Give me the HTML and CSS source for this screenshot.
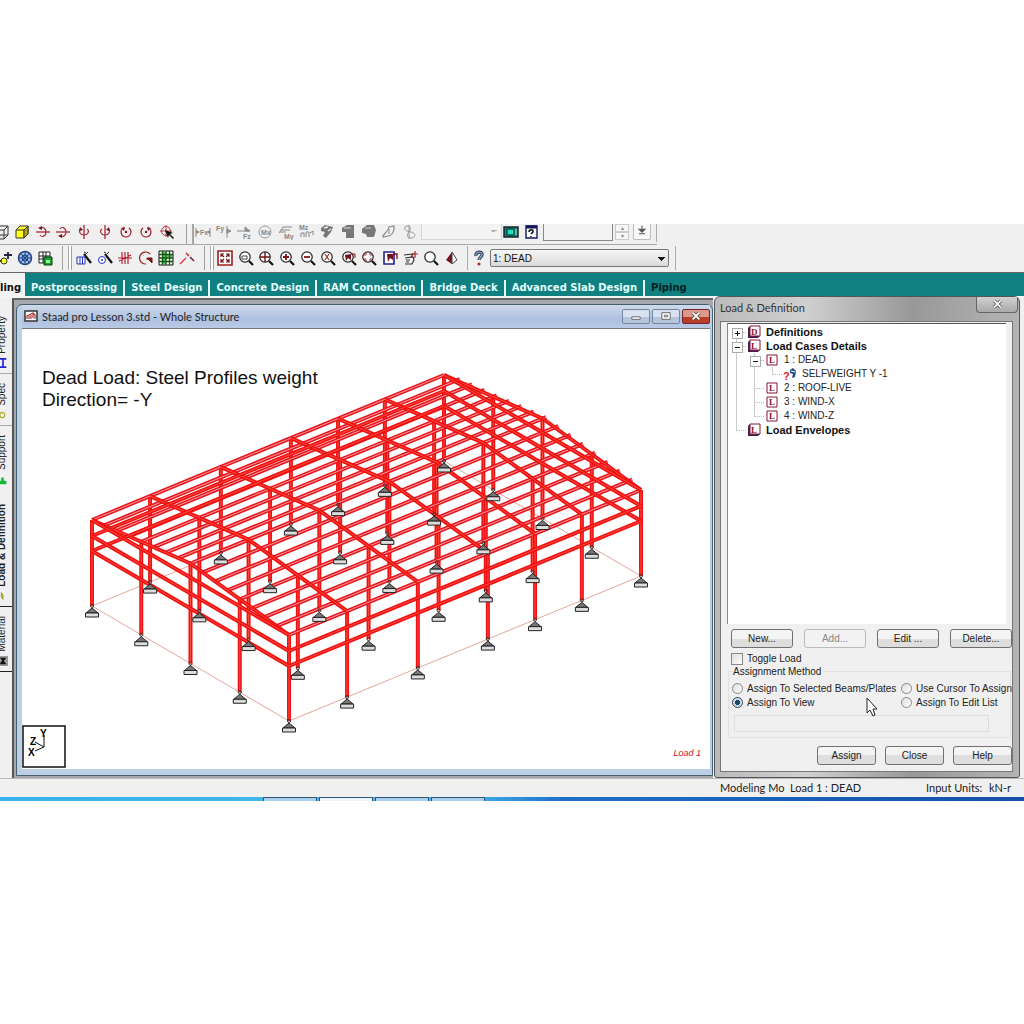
FILE: index.html
```html
<!DOCTYPE html>
<html lang="en">
<head>
<meta charset="UTF-8">
<meta name="viewport" content="width=device-width, initial-scale=1.0">
<title>Staad pro Lesson 3.std - Whole Structure</title>
<link rel="stylesheet" href="styles.css">
</head>
<body>
<svg class="defs" aria-hidden="true">
    <symbol id="lens" viewBox="0 0 16 16"><circle cx="7" cy="7" r="5.2" fill="#fff" stroke="#222" stroke-width="1.2"/><path d="M11 11l4 4" stroke="#111" stroke-width="2.2"/></symbol>
    <symbol id="book" viewBox="0 0 14 14"><path d="M1 3l2-2h10v10l-2 2H1z" fill="#402050"/><path d="M3 1h10v10H3z" fill="#fff" stroke="#8a1530"/></symbol>
</svg>
<div class="app">
    <div class="toolbar toolbar-top">
        <button class="tool half" aria-label="Isometric"><svg viewBox="0 0 16 16"><path d="M1 6h9v9H1zM1 6l4-4h9v9l-4 4M10 6l4-4M5 2v9h9M5 11l-4 4" fill="none" stroke="#333"/></svg></button>
        <div class="tools view-tools">
            <button class="tool" aria-label="Solid view"><svg viewBox="0 0 16 16"><path d="M2 6l4-4h8v8l-4 4H2z" fill="#ffff20" stroke="#333"/><path d="M2 6h8v8M10 6l4-4" fill="none" stroke="#333"/><path d="M10 6l4-4v8l-4 4z" fill="#b8a800" stroke="#333"/></svg></button>
            <button class="tool" aria-label="Rotate up"><svg viewBox="0 0 16 16"><path d="M5 11c2 3 6 1 6-3s-4-6-6-3" fill="none" stroke="#b03040" stroke-width="1.2"/><path d="M1 8h14" stroke="#a01828" stroke-width="1.2"/><path d="M3 4l4-2v4z" fill="#801020"/></svg></button>
            <button class="tool" aria-label="Rotate down"><svg viewBox="0 0 16 16"><path d="M5 11c2 3 6 1 6-3s-4-6-6-3" fill="none" stroke="#b03040" stroke-width="1.2"/><path d="M1 8h14" stroke="#a01828" stroke-width="1.2"/><path d="M3 12l4-2v4z" fill="#801020"/></svg></button>
            <button class="tool" aria-label="Rotate left"><svg viewBox="0 0 16 16"><path d="M5 5c-3 2-1 6 3 6s6-4 3-6" fill="none" stroke="#b03040" stroke-width="1.2"/><path d="M8 1v14" stroke="#a01828" stroke-width="1.2"/><path d="M4 3l3 3-4 1z" fill="#801020"/></svg></button>
            <button class="tool" aria-label="Rotate right"><svg viewBox="0 0 16 16"><path d="M5 5c-3 2-1 6 3 6s6-4 3-6" fill="none" stroke="#b03040" stroke-width="1.2"/><path d="M8 1v14" stroke="#a01828" stroke-width="1.2"/><path d="M12 3l-3 3 4 1z" fill="#801020"/></svg></button>
            <button class="tool" aria-label="Spin left"><svg viewBox="0 0 16 16"><path d="M4 5a5 5 0 1 0 7-1" fill="none" stroke="#a01828" stroke-width="1.2"/><path d="M3 4l4-1-1 4z" fill="#801020"/><circle cx="8" cy="8" r="1.2" fill="#801020"/></svg></button>
            <button class="tool" aria-label="Spin right"><svg viewBox="0 0 16 16"><path d="M12 5a5 5 0 1 1-7-1" fill="none" stroke="#a01828" stroke-width="1.2"/><path d="M13 4l-4-1 1 4z" fill="#801020"/><circle cx="8" cy="8" r="1.2" fill="#801020"/></svg></button>
            <button class="tool" aria-label="Pick rotation"><svg viewBox="0 0 16 16"><circle cx="7" cy="7" r="4.5" fill="none" stroke="#b03040"/><path d="M1 7h12M7 1v12" stroke="#c04050"/><path d="M6 6l8 3-3 1 4 4-1 1-4-4-1 3z" fill="#111"/></svg></button>
        </div>
        <i class="grip"></i>
        <div class="tools force-tools">
            <button class="tool" disabled aria-label="Axial force"><svg viewBox="0 0 16 16"><path d="M1 4v9M15 4v9" stroke="#888"/><path d="M1 6l4 2-4 2zM15 6l-3 2 3 2z" fill="#888"/><text x="5" y="11" class="mini">Fx</text></svg></button>
            <button class="tool" disabled aria-label="Shear Y"><svg viewBox="0 0 16 16"><path d="M11 2v12M11 5l4 2-4 2z" fill="#999" stroke="#888"/><text x="0" y="7" class="mini">Fy</text></svg></button>
            <button class="tool" disabled aria-label="Shear Z"><svg viewBox="0 0 16 16"><path d="M1 7h13M9 3v4l5 0z" fill="#999" stroke="#888"/><text x="7" y="15" class="mini">Fz</text></svg></button>
            <button class="tool" disabled aria-label="Moment X"><svg viewBox="0 0 16 16"><circle cx="8" cy="8" r="6" fill="none" stroke="#999"/><text x="4" y="11" class="mini">Mx</text></svg></button>
            <button class="tool" disabled aria-label="Moment Y"><svg viewBox="0 0 16 16"><path d="M1 9L5 3h9M3 6h9M2 8h6" fill="none" stroke="#888"/><text x="6" y="15" class="mini">My</text></svg></button>
            <button class="tool" disabled aria-label="Moment Z"><svg viewBox="0 0 16 16"><text x="1" y="6" class="mini">Mz</text><path d="M3 13V9h3v4M8 13V8h3v5M12 9l3-2v4" fill="none" stroke="#888"/></svg></button>
            <button class="tool" disabled aria-label="Beam stress"><svg viewBox="0 0 16 16"><path d="M2 4l4-3 8 2-2 5-5 6-3-2 2-4-4-1z" fill="#777"/><path d="M5 4l4-1M9 7l3-2" stroke="#eee" stroke-width="1.4"/></svg></button>
            <button class="tool" disabled aria-label="Plate stress"><svg viewBox="0 0 16 16"><path d="M2 4l5-3h7v13H6V8H2z" fill="#777"/><path d="M4 4h7" stroke="#ddd"/></svg></button>
            <button class="tool" disabled aria-label="Solid stress"><svg viewBox="0 0 16 16"><path d="M1 5l5-4h7l2 5-2 7H6l-1-3-4-1z" fill="#777"/><path d="M4 4h6" stroke="#ccc"/></svg></button>
            <button class="tool" disabled aria-label="Mode shape"><svg viewBox="0 0 16 16"><path d="M2 13c0-4 5-4 6-10l5-1c1 6-3 10-6 10z" fill="none" stroke="#888" stroke-width="1.2"/><path d="M8 5v5" stroke="#888"/></svg></button>
            <button class="tool" disabled aria-label="Deflection"><svg viewBox="0 0 16 16"><path d="M3 3c6-4 6 3 4 5s-3 6 2 6 5-5 0-6-7-2-6-5zM7 1v14" fill="none" stroke="#999"/></svg></button>
        </div>
        <select class="combo-faded" disabled aria-label="Mode"><option></option></select>
        <button class="tool" aria-label="Animation"><svg viewBox="0 0 16 16"><path d="M1 3h14v10H1z" fill="#188" stroke="#222" stroke-width="1.5"/><path d="M4 5h7v6H4z" fill="#20e0b0" stroke="#024"/><path d="M13 5v6" stroke="#afa"/></svg></button>
        <button class="tool" aria-label="Help topics"><svg viewBox="0 0 16 16"><path d="M3 2h11v12H3z" fill="#fff" stroke="#15155c" stroke-width="1.4"/><path d="M3 3h11" stroke="#15155c" stroke-width="3"/><path d="M6 8c0-3 5-3 4 0L8 10M8 12v1" fill="none" stroke="#111" stroke-width="1.5"/></svg></button>
        <input class="scale-box" aria-label="Scale">
        <div class="spinner"><button aria-label="Increase">&#9652;</button><button aria-label="Decrease">&#9662;</button></div>
        <button class="drop" aria-label="Apply scale"><svg viewBox="0 0 16 16"><path d="M8 2v7M4 7h8l-4 4zM4 13h8" fill="#555" stroke="#555" stroke-width="1.4"/></svg></button>
        <i class="bar-end"></i>
    </div>

    <div class="toolbar toolbar-low">
        <div class="tools left-tools">
            <button class="tool" aria-label="Add node"><svg viewBox="0 0 16 16"><path d="M2 11h6" stroke="#333" stroke-width="2"/><circle cx="8" cy="11" r="3" fill="#ff3" stroke="#332"/><path d="M12 2v7M8 5h8" stroke="#224" stroke-width="1.8"/></svg></button>
            <button class="tool" aria-label="Mesh"><svg viewBox="0 0 16 16"><circle cx="8" cy="8" r="6.5" fill="#9bd" stroke="#224488" stroke-width="1.5"/><circle cx="8" cy="8" r="3" fill="none" stroke="#224488"/><path d="M8 1v14M1 8h14M3 3l10 10M13 3L3 13" stroke="#224488"/></svg></button>
            <button class="tool" aria-label="Table"><svg viewBox="0 0 16 16"><path d="M1 2h11v11H1zM1 6h11M1 9h11M5 2v11M8 2v11" fill="#fff" stroke="#222"/><path d="M6 7h8v8H6z" fill="#1b9e30" stroke="#041"/><path d="M8 10h4v3H8z" fill="#9f9"/></svg></button>
        </div>
        <i class="grip grip-a"></i>
        <div class="tools geo-tools">
            <button class="tool" aria-label="Structure wizard"><svg viewBox="0 0 16 16"><path d="M1 7h8v7H1zM4 7v7M6.500 7v7" fill="#fff" stroke="#2030c0"/><path d="M8 4l7 9" stroke="#111" stroke-width="2.2"/><path d="M12 2l-4 4M8 2l2 1" stroke="#333"/></svg></button>
            <button class="tool" aria-label="Node wizard"><svg viewBox="0 0 16 16"><circle cx="5" cy="10" r="3.500" fill="#fff" stroke="#2030c0"/><circle cx="5" cy="10" r="1" fill="#2030c0"/><path d="M8 4l7 9" stroke="#111" stroke-width="2.2"/><path d="M12 2L8 6M7 2l2 1" stroke="#333"/></svg></button>
            <button class="tool" aria-label="Translate"><svg viewBox="0 0 16 16"><path d="M1 8h14M5 2v12M8 2v12M11 2v12M2 11l12-6" stroke="#b02030" stroke-width="1.2"/></svg></button>
            <button class="tool" aria-label="Circular repeat"><svg viewBox="0 0 16 16"><path d="M12 4a6 6 0 1 0-4 10" fill="none" stroke="#922" stroke-width="1.2"/><path d="M8 9h5M9 8l5 5V8z" fill="#711" stroke="#711"/></svg></button>
            <button class="tool" aria-label="Grid"><svg viewBox="0 0 16 16"><path d="M1 1h14v14H1z" fill="#fff" stroke="#111"/><path d="M5 2h3v12H5zM9 5h5v3H9z" fill="#5c5"/><path d="M1 4.500h14M1 8h14M1 11.500h14M4.500 1v14M8 1v14M11.500 1v14" stroke="#151" stroke-width="1.3"/></svg></button>
            <button class="tool" aria-label="Split beam"><svg viewBox="0 0 16 16"><path d="M1 14l6-6" stroke="#e04040" stroke-width="1.4"/><path d="M7 3l3 3" stroke="#d02030" stroke-width="1.4"/><path d="M11 7l4 4" stroke="#625" stroke-width="1.6"/></svg></button>
        </div>
        <i class="grip grip-b"></i>
        <div class="tools zoom-tools">
            <button class="tool" aria-label="Whole structure"><svg viewBox="0 0 16 16"><path d="M1 1h14v14H1z" fill="#fff" stroke="#922" stroke-width="1.6"/><path d="M4 7V4h3M4 4l3 3M12 7V4H9M12 4L9 7M4 9v3h3M4 12l3-3M12 9v3H9M12 12L9 9" fill="none" stroke="#711" stroke-width="1.2"/></svg></button>
            <button class="tool" aria-label="Zoom window"><svg viewBox="0 0 16 16"><use href="#lens"/><path d="M4 6h5v3H4z" fill="none" stroke="#444"/></svg></button>
            <button class="tool" aria-label="Zoom extents"><svg viewBox="0 0 16 16"><use href="#lens"/><path d="M7 2v10M2 7h10" stroke="#711" stroke-width="1.4"/></svg></button>
            <button class="tool" aria-label="Zoom in"><svg viewBox="0 0 16 16"><use href="#lens"/><path d="M7 4v6M4 7h6" stroke="#811" stroke-width="1.8"/></svg></button>
            <button class="tool" aria-label="Zoom out"><svg viewBox="0 0 16 16"><use href="#lens"/><path d="M4 7h6" stroke="#811" stroke-width="1.8"/></svg></button>
            <button class="tool" aria-label="Zoom factor"><svg viewBox="0 0 16 16"><use href="#lens"/><path d="M5 4l4 6M9 4l-4 6" stroke="#a33" stroke-width="1.2"/></svg></button>
            <button class="tool" aria-label="Zoom previous"><svg viewBox="0 0 16 16"><use href="#lens"/><path d="M4 5l6-1v6l-3-2-2 3z" fill="#701020"/><path d="M10 4h4v4" fill="none" stroke="#811"/></svg></button>
            <button class="tool" aria-label="Zoom all"><svg viewBox="0 0 16 16"><use href="#lens"/><path d="M4 6V4h2M8 4h2v2M10 8v2H8M6 10H4V8" fill="none" stroke="#a33"/></svg></button>
            <button class="tool" aria-label="Display region"><svg viewBox="0 0 16 16"><path d="M2 2h10v12H2z" fill="#fff" stroke="#228" stroke-width="1.6"/><path d="M5 4l6 0v6l-3-2-2 4z" fill="#701020"/><path d="M11 4h4v5" fill="none" stroke="#811" stroke-width="1.3"/></svg></button>
            <button class="tool" aria-label="Pan"><svg viewBox="0 0 16 16"><path d="M2 14h7l2-4-1-3-8 1M1 5l9-1-2 3M3 10h4M3 12h3" fill="none" stroke="#333" stroke-width="1.2"/><path d="M12 1v7M9 4h6" stroke="#a22" stroke-width="1.2"/></svg></button>
            <button class="tool" aria-label="Magnifier"><svg viewBox="0 0 16 16"><use href="#lens"/></svg></button>
            <button class="tool" aria-label="Perspective"><svg viewBox="0 0 16 16"><path d="M8 2L2 10l6 4z" fill="#701020"/><path d="M8 2l5 8-5 4z" fill="#fff" stroke="#444"/></svg></button>
        </div>
        <i class="line"></i>
        <button class="tool help-tool" aria-label="What is this"><svg viewBox="0 0 16 16"><path d="M5 6c-1-5 7-5 6-1-1 3-3 2-3 5" fill="none" stroke="#334" stroke-width="3.200"/><path d="M5 6c-1-5 7-5 6-1-1 3-3 2-3 5" fill="none" stroke="#7ad" stroke-width="1.300"/><circle cx="8" cy="14" r="1.600" fill="#a33"/></svg></button>
        <select class="load-combo" aria-label="Active load"><option>1: DEAD</option></select>
        <i class="line"></i>
    </div>

    <nav class="tabs">
        <a class="active" href="#">ling</a>
        <a href="#">Postprocessing</a>
        <a href="#">Steel Design</a>
        <a href="#">Concrete Design</a>
        <a href="#">RAM Connection</a>
        <a href="#">Bridge Deck</a>
        <a href="#">Advanced Slab Design</a>
        <a class="off" href="#">Piping</a>
    </nav>

    <div class="main">
        <div class="pages">
            <a class="page-property" href="#"><svg viewBox="0 0 12 12"><path d="M2 1h8M2 11h8M6 1v10" stroke="#22d" stroke-width="2"/></svg><span>Property</span></a>
            <a class="page-spec" href="#"><svg viewBox="0 0 12 12"><circle cx="5" cy="6" r="3" fill="#fff" stroke="#aa2" stroke-width="1.500"/></svg><span>Spec</span></a>
            <a class="page-support" href="#"><svg viewBox="0 0 12 12"><path d="M1 11V7h3V3h3v4h3v4z" fill="#1b3"/></svg><span>Support</span></a>
            <a class="page-load" href="#"><svg viewBox="0 0 12 12"><path d="M4 2v5l2 3V5z" fill="#dd2" stroke="#882"/></svg><span>Load &amp; Definition</span></a>
            <a class="page-material" href="#"><svg viewBox="0 0 12 12"><path d="M0 0h12v12H0z" fill="#999"/><path d="M2 2l3 3-3 5h8L7 6l3-4z" fill="#111"/></svg><span>Material</span></a>
        </div>

        <div class="workspace">
            <div class="window">
                <div class="window-title">
                    <svg class="doc-icon" viewBox="0 0 14 12"><path d="M1 1h12v10H1z" fill="#fff" stroke="#333" stroke-width="1.500"/><path d="M3 9V6l6-3 2 2v4M5 9V6M7 9V5M9 8V4" fill="none" stroke="#a33" stroke-width="1.200"/></svg>
                    <span>Staad pro Lesson 3.std - Whole Structure</span>
                    <div class="window-buttons">
                        <button aria-label="Minimize"><svg viewBox="0 0 12 12"><path d="M1 7h10v3H1z" fill="#fff" stroke="#555"/></svg></button>
                        <button aria-label="Maximize"><svg viewBox="0 0 12 12"><path d="M1 2h10v8H1z" fill="#fff" stroke="#555"/><path d="M4 5h4v2H4z" fill="none" stroke="#555"/></svg></button>
                        <button class="close" aria-label="Close window"><svg viewBox="0 0 12 12"><path d="M2 2l8 8M10 2l-8 8" stroke="#544" stroke-width="4"/><path d="M2 2l8 8M10 2l-8 8" stroke="#fff" stroke-width="2.200"/></svg></button>
                    </div>
                </div>
                <div class="view">
                    <svg id="model" viewBox="0 0 688 440" preserveAspectRatio="xMinYMin meet"></svg>
                    <p class="note">Dead Load: Steel Profiles weight<br>Direction= -Y</p>
                    <svg class="axes" viewBox="0 0 44 43"><path d="M1 1h42v41H1z" fill="#fff" stroke="#111" stroke-width="1.500"/><path d="M22 22V10M22 22l-9-5M22 22l-9 4" fill="none" stroke="#111"/><text x="18" y="12">Y</text><text x="8" y="20">Z</text><text x="6" y="31">X</text></svg>
                    <span class="load-label">Load 1</span>
                </div>
            </div>
        </div>

        <div class="dialog">
            <div class="dialog-title">
                <span>Load &amp; Definition</span>
                <button aria-label="Close dialog"><svg viewBox="0 0 12 12"><path d="M2 2l8 8M10 2l-8 8" stroke="#555" stroke-width="4"/><path d="M2 2l8 8M10 2l-8 8" stroke="#fff" stroke-width="2"/></svg></button>
            </div>
            <div class="dialog-body">
                <ul class="tree">
                    <li class="top"><i class="g box plus first"></i><svg viewBox="0 0 14 14"><use href="#book"/><text x="4" y="10">D</text></svg>Definitions</li>
                    <li class="top"><i class="g box minus"></i><svg viewBox="0 0 14 14"><use href="#book"/><text x="4" y="10">L</text></svg>Load Cases Details</li>
                    <li><i class="g pipe"></i><i class="g box minus"></i><svg viewBox="0 0 14 14"><path d="M2 2h10v10H2z" fill="#fff" stroke="#8a1530"/><text x="4" y="10">L</text></svg>1 : DEAD</li>
                    <li><i class="g pipe"></i><i class="g pipe"></i><i class="g elbow"></i><svg viewBox="0 0 14 14"><text x="0" y="13" class="query">?</text><path d="M7 3l3-2 3 3-1 6-3 1 1-4-3-1z" fill="#1c4f7c"/><path d="M8 4l4 1" stroke="#fff"/></svg>SELFWEIGHT Y -1</li>
                    <li><i class="g pipe"></i><i class="g tee"></i><svg viewBox="0 0 14 14"><path d="M2 2h10v10H2z" fill="#fff" stroke="#8a1530"/><text x="4" y="10">L</text></svg>2 : ROOF-LIVE</li>
                    <li><i class="g pipe"></i><i class="g tee"></i><svg viewBox="0 0 14 14"><path d="M2 2h10v10H2z" fill="#fff" stroke="#8a1530"/><text x="4" y="10">L</text></svg>3 : WIND-X</li>
                    <li><i class="g pipe"></i><i class="g elbow"></i><svg viewBox="0 0 14 14"><path d="M2 2h10v10H2z" fill="#fff" stroke="#8a1530"/><text x="4" y="10">L</text></svg>4 : WIND-Z</li>
                    <li class="top"><i class="g elbow"></i><svg viewBox="0 0 14 14"><use href="#book"/><text x="4" y="10">L</text></svg>Load Envelopes</li>
                </ul>
                <div class="edit-row">
                    <button class="btn">New...</button>
                    <button class="btn" disabled>Add...</button>
                    <button class="btn">Edit ...</button>
                    <button class="btn">Delete...</button>
                </div>
                <label class="check"><input type="checkbox">Toggle Load</label>
                <fieldset>
                    <legend>Assignment Method</legend>
                    <div class="methods">
                        <label><input type="radio" name="method">Assign To Selected Beams/Plates</label>
                        <label><input type="radio" name="method">Use Cursor To Assign</label>
                        <label><input type="radio" name="method" checked>Assign To View</label>
                        <label><input type="radio" name="method">Assign To Edit List</label>
                    </div>
                    <input class="edit-list" type="text" disabled aria-label="Edit list">
                </fieldset>
                <div class="action-row">
                    <button class="btn">Assign</button>
                    <button class="btn">Close</button>
                    <button class="btn">Help</button>
                </div>
                <svg class="cursor" viewBox="0 0 12 20"><path d="M1 1v15l3-3 3 6 2-1-2-6h4z" fill="#fff" stroke="#222"/></svg>
            </div>
        </div>
    </div>

    <footer class="status">
        <span class="mode">Modeling Mo</span>
        <span class="load">Load 1 : DEAD</span>
        <span class="units">Input Units:</span>
        <span class="unit">kN-r</span>
    </footer>
    <div class="taskbar"><i></i><i class="lit"></i><i></i><i></i></div>
</div>
<script src="script.js"></script>
</body>
</html>
```
FILE: styles.css
```css
* {
    box-sizing: border-box;
}

body {
    margin: 0;
    min-height: 100vh;
    display: flex;
    flex-direction: column;
    justify-content: center;
    background: #fff;
    font-family: "Liberation Sans", Arial, sans-serif;
    font-size: 10px;
    color: #222;
}

a {
    color: inherit;
    text-decoration: none;
}

button {
    padding: 0;
    font: inherit;
    color: inherit;
}

.defs {
    position: absolute;
    width: 0;
    height: 0;
}

.app {
    background: #f0f0f0;
    overflow: hidden;
}

/* toolbars */
.toolbar {
    display: flex;
    align-items: center;
    border-bottom: 1px solid #a8a8a8;
}

.toolbar-top {
    height: 21px;
    padding-bottom: 4px;
    width: 657px;
}

.toolbar-low {
    height: 27px;
    border-bottom: 0;
}

.tools {
    display: flex;
    justify-content: space-between;
    flex: none;
}

.tool {
    width: 16px;
    height: 16px;
    flex: none;
    border: 0;
    background: none;
}

.tool svg {
    display: block;
    width: 16px;
    height: 16px;
}

.half {
    margin-left: -6px;
}

.view-tools {
    width: 161px;
    margin-left: 4px;
}

.force-tools {
    width: 223px;
    margin-right: 3px;
}

.left-tools {
    width: 58px;
    margin-left: -4px;
}

.geo-tools {
    width: 119px;
}

.zoom-tools {
    width: 243px;
    margin-right: 7px;
}

.mini {
    font-size: 7px;
    font-weight: bold;
    fill: #888;
}

.grip {
    width: 10px;
    height: 24px;
    flex: none;
    border: solid #a0a0a0;
    border-width: 0 1px;
    background: linear-gradient(90deg, transparent 5px, #aaa 5px, #aaa 6px, #fff 6px);
}

.toolbar-top .grip {
    width: 8px;
    margin: 0 1px 0 11px;
}

.grip-a {
    margin: 0 4px 0 8px;
}

.grip-b {
    margin: 0 3px 0 9px;
}

.line {
    width: 1px;
    height: 24px;
    background: #aaa;
}

.bar-end {
    width: 1px;
    height: 21px;
    margin-left: auto;
    background: #aaa;
}

.combo-faded {
    width: 81px;
    height: 17px;
    margin-right: 1px;
    appearance: none;
    border: 1px solid #ccc;
    border-top: 0;
    background: linear-gradient(to bottom left, #999 50%, transparent 50%) no-repeat 69px 7px / 3px 3px,
        linear-gradient(to bottom right, #999 50%, transparent 50%) no-repeat 72px 7px / 3px 3px,
        #f6f6f6;
}

.combo-faded ~ .tool {
    margin-right: 4px;
}

.scale-box {
    width: 70px;
    height: 18px;
    border: 1px solid #888;
    border-top: 0;
    background: #f4f4f4;
}

.spinner {
    display: flex;
    flex-direction: column;
    width: 14px;
    margin: 0 4px 0 2px;
}

.spinner button {
    height: 8px;
    border: 1px solid #ccc;
    background: #f6f6f6;
    font-size: 6px;
    line-height: 6px;
    color: #888;
}

.drop {
    width: 18px;
    height: 17px;
    border: 1px solid #bbb;
    border-top: 0;
    border-radius: 2px;
    background: #f8f8f8;
}

.drop svg {
    width: 12px;
    height: 12px;
}

.help-tool {
    margin: 0 3px;
}

.load-combo {
    width: 179px;
    height: 18px;
    margin-right: 6px;
    padding: 0 2px;
    border: 1px solid #777;
    border-radius: 2px;
    appearance: none;
    font: inherit;
    color: #111;
    background: linear-gradient(to bottom left, #111 50%, transparent 50%) no-repeat 167px 7px / 4px 4px,
        linear-gradient(to bottom right, #111 50%, transparent 50%) no-repeat 171px 7px / 4px 4px,
        linear-gradient(#f6f6f6, #dadada);
}

/* mode tabs */
.tabs {
    display: flex;
    align-items: flex-end;
    height: 26px;
    border-top: 1px solid #666;
    border-bottom: 2px solid #f4f4f4;
    background: #108080;
    font: bold 10px/16px "DejaVu Sans", Verdana, sans-serif;
    color: #e4ffff;
}

.tabs a {
    padding: 0 6px;
    border-right: 2px solid #e8f8f8;
}

.tabs .active {
    align-self: stretch;
    width: 25px;
    padding: 7px 0 0;
    border: 0;
    background: #f4f4f4;
    color: #111;
}

.tabs .off {
    border: 0;
    color: #022;
}

/* main area */
.main {
    display: grid;
    grid-template-columns: 12px minmax(0, 1fr) 311px;
}

.pages {
    display: flex;
    flex-direction: column;
    overflow: hidden;
    background: #f0f0f0;
}

.pages a {
    display: flex;
    flex-direction: column-reverse;
    align-items: flex-end;
    gap: 3px;
    padding: 0 4px 4px 0;
    border-bottom: 1px solid #aaa;
}

.pages span {
    writing-mode: vertical-rl;
    transform: rotate(180deg);
    line-height: 12px;
}

.pages svg {
    width: 10px;
    height: 12px;
    flex: none;
}

.page-property {
    height: 76px;
}

.page-spec {
    height: 52px;
}

.page-support {
    height: 64px;
}

.pages .page-support {
    border: 0;
}

.pages .page-load {
    height: 117px;
    border-color: #222;
    font-weight: bold;
}

.pages .page-material {
    height: 65px;
    border-color: #222;
}

.workspace {
    padding: 4px 0 2px 2px;
    border-top: 2px solid #666;
    border-left: 2px solid #555;
    background: #a5a9ad;
}

.window {
    padding: 0 2px 6px 5px;
    border: 1px solid #45606c;
    border-radius: 6px 6px 0 0;
    background: #bccfe6;
}

.window-title {
    display: flex;
    align-items: center;
    height: 23px;
    font: 11px Lato, "Segoe UI", sans-serif;
    background: linear-gradient(#d0dbea, #adc0df 60%, #b8cae4);
}

.doc-icon {
    width: 14px;
    height: 12px;
    margin: 0 4px 0 2px;
}

.window-buttons {
    display: flex;
    gap: 2px;
    margin-left: auto;
}

.window-buttons button {
    width: 28px;
    height: 15px;
    border: 1px solid #7587a0;
    border-radius: 2px;
    background: linear-gradient(#d8e2f0 50%, #b6c5da 50%);
}

.window-buttons svg {
    display: block;
    width: 12px;
    height: 10px;
    margin: auto;
}

.window-buttons .close {
    border-color: #723;
    background: linear-gradient(#dc9a88 50%, #b83e28 50%);
}

.view {
    position: relative;
    border-top: 1px solid #777;
    background: #fff;
}

#model {
    display: block;
    width: 100%;
}

.note {
    position: absolute;
    left: 20px;
    top: 38px;
    margin: 0;
    font-size: 19px;
    line-height: 22px;
    color: #111;
}

.axes {
    position: absolute;
    left: 0;
    bottom: 1px;
    width: 44px;
    height: 43px;
    font-size: 10px;
    font-weight: bold;
}

.load-label {
    position: absolute;
    right: 9px;
    bottom: 11px;
    font-size: 9px;
    font-style: italic;
    color: #e01010;
}

.ground {
    fill: none;
    stroke: #e0a898;
}

.member {
    stroke: #f01010;
    stroke-width: 4;
}

.core {
    stroke: #ff4a40;
    stroke-width: 1;
}

.purlin {
    stroke: #e81420;
    stroke-width: 4;
}

.purlin-core {
    stroke: #ffa09a;
    stroke-width: 1;
}

.support {
    fill: #777;
    stroke: #222;
}

.plate {
    fill: #ddd;
    stroke: #222;
}

.pin {
    fill: none;
    stroke: #333;
}

/* load dialog */
.dialog {
    position: relative;
    display: flex;
    flex-direction: column;
    margin: -2px 4px 0 1px;
    padding: 0 6px 5px 5px;
    border: 1px solid #555;
    border-radius: 6px 6px 3px 3px;
    background: linear-gradient(90deg, #bbb, #d0d0d0 30%, #989898 65%, #b4b4b4);
}

.dialog-title {
    display: flex;
    align-items: flex-start;
    justify-content: space-between;
    height: 24px;
    font: 11px/22px Lato, "Segoe UI", sans-serif;
    color: #333;
}

.dialog-title button {
    width: 42px;
    height: 16px;
    margin-right: -5px;
    border: 1px solid #666;
    border-top: 0;
    border-radius: 0 0 4px 4px;
    background: linear-gradient(#d0d0d0, #aaa);
}

.dialog-title svg {
    display: block;
    width: 11px;
    height: 10px;
    margin: auto;
}

.dialog-body {
    position: relative;
    flex: 1;
    padding: 1px 0 0 6px;
    border: 1px solid #777;
    background: #f0f0f0;
}

.tree {
    width: 279px;
    height: 301px;
    margin: 0;
    padding: 1px 0 0;
    list-style: none;
    border-top: 1px solid #555;
    border-left: 1px solid #888;
    background: #fff;
}

.tree li {
    display: flex;
    align-items: center;
    height: 14px;
    white-space: pre;
}

.tree .top {
    font-size: 11px;
    font-weight: bold;
    color: #111;
}

.tree svg {
    width: 14px;
    height: 14px;
    margin: 0 5px 0 1px;
    font: bold 9px "Liberation Serif", serif;
    fill: #8a1530;
}

.tree .query {
    font: bold 11px "Liberation Sans", sans-serif;
    fill: #e02020;
}

.g {
    position: relative;
    width: 18px;
    height: 14px;
    flex: none;
}

.pipe,
.tee,
.box {
    background: linear-gradient(#ccc, #ccc) no-repeat 8px 0 / 1px 14px;
}

.elbow {
    background: linear-gradient(#ccc, #ccc) no-repeat 8px 0 / 1px 8px;
}

.first {
    background-position: 8px 7px;
}

.tee::after,
.elbow::after,
.box::after {
    content: "";
    position: absolute;
    left: 9px;
    top: 7px;
    width: 9px;
    border-top: 1px dotted #bbb;
}

.box::before {
    content: "";
    position: absolute;
    z-index: 1;
    left: 4px;
    top: 3px;
    width: 9px;
    height: 9px;
    border: 1px solid #aaa;
    background: linear-gradient(#111, #111) no-repeat center / 5px 1px, #fff;
}

.plus::before {
    background: linear-gradient(#111, #111) no-repeat center / 5px 1px,
        linear-gradient(#111, #111) no-repeat center / 1px 5px, #fff;
}

.btn {
    width: 62px;
    height: 19px;
    border: 1px solid #707070;
    border-radius: 3px;
    background: linear-gradient(#f4f4f4 50%, #dedede 50%);
    color: #222;
}

.btn:disabled {
    border-color: #bbb;
    background: #f2f2f2;
    color: #888;
}

.edit-row {
    display: flex;
    gap: 11px;
    margin: 5px 0 4px 4px;
}

.check,
.methods label {
    display: flex;
    align-items: center;
    height: 14px;
    white-space: nowrap;
}

.check {
    margin-left: 4px;
}

.check input,
.methods input {
    appearance: none;
    width: 12px;
    height: 12px;
    flex: none;
    margin: 0 4px 0 0;
    border: 1px solid #888;
    background: linear-gradient(135deg, #ddd, #fff);
}

.methods input {
    width: 11px;
    height: 11px;
    border-radius: 50%;
}

.methods input:checked {
    border-color: #345;
    background: radial-gradient(#1a4560 35%, #cde 45%);
}

fieldset {
    min-width: 0;
    margin: 0 1px 8px;
    padding: 4px 0 5px 3px;
    border: 1px solid #e2e2e2;
}

legend {
    height: 12px;
    padding: 0 1px;
    line-height: 12px;
}

.methods {
    display: grid;
    grid-template-columns: 169px 1fr;
}

.edit-list {
    display: block;
    width: 255px;
    height: 17px;
    margin: 5px 0 0 2px;
    border: 1px solid #ddd;
    background: #f0f0f0;
}

.action-row {
    display: flex;
    justify-content: flex-end;
    gap: 9px;
}

.action-row .btn {
    width: 59px;
}

.cursor {
    position: absolute;
    left: 145px;
    top: 375px;
    width: 12px;
    height: 20px;
}

/* bottom bars */
.status {
    display: flex;
    align-items: center;
    height: 19px;
    padding-right: 14px;
    border-top: 1px solid #bbb;
    font: 11px Lato, "Segoe UI", sans-serif;
    white-space: nowrap;
    background: #f0f0f0;
}

.mode {
    width: 70px;
    margin-left: auto;
}

.load {
    width: 136px;
}

.units {
    width: 63px;
}

.unit {
    width: 21px;
}

.taskbar {
    display: flex;
    gap: 2px;
    height: 4px;
    padding-left: 263px;
    background: linear-gradient(90deg, #35b3ea, #48b8ea 45%, #1f6fc8 55%, #1450a8);
}

.taskbar i {
    width: 54px;
    border: 1px solid #357;
    border-bottom: 0;
    background: #a8d0ee;
}

.taskbar .lit {
    background: #eaf4fa;
}
```
FILE: script.js
```js
var svg = document.getElementById("model");
var frames = [0, 0.165, 0.366, 0.565, 0.699, 0.832, 1];
var columns = [0, 0.25, 0.5, 0.75, 1];
var EAVE = 86;
var RISE = 14;

// u runs along the building, v across it, h is the height
function point(u, v, h) {
    return [267 + 352 * u - 197 * v, 392 - 145 * u - 115 * v - h];
}

function roof(v) {
    return EAVE + RISE * (1 - Math.abs(v - 0.5) * 2);
}

function add(name, attrs) {
    var el = document.createElementNS("http://www.w3.org/2000/svg", name);
    for (var key in attrs) {
        el.setAttribute(key, attrs[key]);
    }
    svg.appendChild(el);
}

function line(a, b, cls) {
    add("line", { x1: a[0], y1: a[1], x2: b[0], y2: b[1], "class": cls });
}

function bar(a, b) {
    line(a, b, "member");
    line(a, b, "core");
}

function support(p) {
    var x = p[0], y = p[1];
    add("circle", { cx: x, cy: y, r: 1.5, "class": "pin" });
    add("path", { d: "M" + x + " " + (y + 2) + "l6 5h-12z", "class": "support" });
    add("path", { d: "M" + (x - 6.5) + " " + (y + 7) + "h13v4h-13z", "class": "plate" });
}

// ground outline
add("polygon", {
    points: [point(0, 0, 0), point(1, 0, 0), point(1, 1, 0), point(0, 1, 0)].join(" "),
    "class": "ground"
});

// columns, back to front
frames.slice().reverse().forEach(function (u) {
    columns.slice().reverse().forEach(function (v) {
        bar(point(u, v, 0), point(u, v, roof(v)));
    });
});

// purlins
for (var i = 16; i >= 0; i--) {
    var v = i / 16;
    var a = point(0, v, roof(v));
    var b = point(i % 16 ? 1.01 : 1, v, roof(v));
    line(a, b, "purlin");
    line(a, b, "purlin-core");
}

// rafters
frames.forEach(function (u) {
    bar(point(u, 1, EAVE), point(u, 0.5, EAVE + RISE));
    bar(point(u, 0.5, EAVE + RISE), point(u, 0, EAVE));
});

// wall girts
[55, 70].forEach(function (h) {
    bar(point(0, 1, h), point(1, 1, h));
    bar(point(1, 1, h), point(1, 0, h));
    bar(point(0, 1, h), point(0, 0, h));
    bar(point(0, 0, h), point(1, 0, h));
});
bar(point(0, 1, EAVE), point(0, 0, EAVE));
bar(point(1, 1, EAVE), point(1, 0, EAVE));

frames.forEach(function (u) {
    columns.forEach(function (v) {
        support(point(u, v, 0));
    });
});
```
